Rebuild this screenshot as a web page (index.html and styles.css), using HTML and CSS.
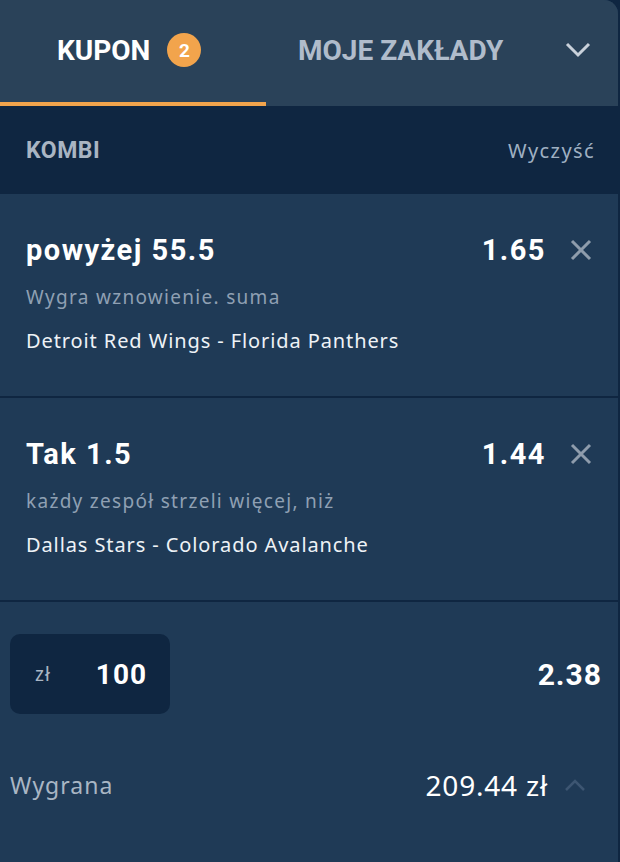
FILE: index.html
```html
<!DOCTYPE html>
<html lang="pl">
<head>
    <meta charset="UTF-8">
    <meta name="viewport" content="width=device-width, initial-scale=1.0">
    <title>Kupon</title>
    <link rel="stylesheet" href="styles.css">
</head>
<body>
    <div class="slip">
        <div class="tabs">
            <div class="tab active">
                <span>KUPON</span>
                <span class="badge">2</span>
            </div>
            <div class="tab">MOJE ZAKŁADY</div>
            <div class="toggle">
                <svg width="26" height="16" viewBox="0 0 26 16"><path d="M2 2 L13 13 L24 2" fill="none" stroke="#c9d1db" stroke-width="3"/></svg>
            </div>
        </div>

        <div class="kombi-bar">
            <span class="kombi">KOMBI</span>
            <span class="clear">Wyczyść</span>
        </div>

        <div class="bet">
            <div class="bet-head">
                <span class="bet-title">powyżej 55.5</span>
                <span class="bet-odds">1.65</span>
                <svg class="remove" width="22" height="22" viewBox="0 0 22 22"><path d="M2 2 L20 20 M20 2 L2 20" stroke="#8e9cac" stroke-width="3"/></svg>
            </div>
            <div class="bet-market">Wygra wznowienie. suma</div>
            <div class="bet-event">Detroit Red Wings - Florida Panthers</div>
        </div>

        <div class="bet">
            <div class="bet-head">
                <span class="bet-title">Tak 1.5</span>
                <span class="bet-odds">1.44</span>
                <svg class="remove" width="22" height="22" viewBox="0 0 22 22"><path d="M2 2 L20 20 M20 2 L2 20" stroke="#8e9cac" stroke-width="3"/></svg>
            </div>
            <div class="bet-market">każdy zespół strzeli więcej, niż</div>
            <div class="bet-event">Dallas Stars - Colorado Avalanche</div>
        </div>

        <div class="stake-row">
            <div class="stake">
                <span class="currency">zł</span>
                <span class="amount">100</span>
            </div>
            <span class="total-odds">2.38</span>
        </div>

        <div class="win-row">
            <span class="win-label">Wygrana</span>
            <span class="win-value">209.44 zł</span>
            <svg class="expand" width="22" height="14" viewBox="0 0 22 14"><path d="M2 12 L11 3 L20 12" fill="none" stroke="#3d5672" stroke-width="2.5"/></svg>
        </div>
    </div>
</body>
</html>
```

FILE: styles.css
```css
body {
    margin: 0;
    background: #0f2641;
    font-family: 'Noto Sans', sans-serif;
}
.slip {
    width: 618px;
    height: 862px;
    background: #1f3a56;
    border-top-right-radius: 14px;
    overflow: hidden;
}
.tabs {
    display: flex;
    align-items: center;
    height: 106px;
    background: #2a4259;
    font-family: 'Roboto', sans-serif;
    font-weight: 700;
    font-size: 28px;
}
.tab {
    height: 106px;
    box-sizing: border-box;
    display: flex;
    align-items: center;
    color: #b0bccb;
    padding-bottom: 2px;
    border-bottom: 4px solid transparent;
}
.tab.active {
    width: 266px;
    padding-left: 57px;
    color: #ffffff;
    border-bottom-color: #f2a44c;
}
.tab + .tab {
    padding-left: 32px;
}
.badge {
    width: 34px;
    height: 34px;
    margin-left: 17px;
    border-radius: 50%;
    background: #f2a44c;
    color: #ffffff;
    font-size: 19px;
    display: flex;
    align-items: center;
    justify-content: center;
}
.toggle {
    margin-left: auto;
    margin-right: 27px;
    margin-bottom: 6px;
    display: flex;
}
.kombi-bar {
    height: 88px;
    display: flex;
    align-items: center;
    justify-content: space-between;
    padding: 0 23px 0 26px;
    background: #0f2641;
}
.kombi {
    font-family: 'Roboto', sans-serif;
    font-weight: 700;
    font-size: 23px;
    letter-spacing: 0.5px;
    color: #a9b5c3;
}
.clear {
    font-size: 20px;
    letter-spacing: 1.4px;
    color: #9fb0c2;
}
.bet {
    height: 204px;
    box-sizing: border-box;
    padding: 34px 26px 0 26px;
    border-bottom: 2px solid #0f2641;
}
.bet-head {
    display: flex;
    align-items: center;
    height: 44px;
    font-family: 'Roboto', sans-serif;
    font-weight: 700;
    font-size: 29px;
    letter-spacing: 1.5px;
    color: #ffffff;
}
.bet-odds {
    margin-left: auto;
}
.remove {
    margin-left: 24px;
}
.bet-market {
    margin-top: 12px;
    font-size: 19px;
    letter-spacing: 1.3px;
    color: #8fa0b3;
}
.bet-event {
    margin-top: 17px;
    font-size: 20px;
    letter-spacing: 0.9px;
    color: #eef2f6;
}
.stake-row {
    display: flex;
    align-items: center;
    justify-content: space-between;
    padding: 32px 16px 0 10px;
}
.stake {
    width: 160px;
    height: 80px;
    box-sizing: border-box;
    padding-left: 25px;
    border-radius: 10px;
    background: #0f2641;
    display: flex;
    align-items: center;
}
.currency {
    font-size: 19px;
    letter-spacing: 1px;
    color: #a9b6c4;
}
.amount {
    margin-left: 45px;
    font-family: 'Roboto', sans-serif;
    font-weight: 700;
    font-size: 28px;
    letter-spacing: 1px;
    color: #ffffff;
}
.total-odds {
    font-family: 'Roboto', sans-serif;
    font-weight: 700;
    font-size: 30px;
    letter-spacing: 1px;
    color: #ffffff;
}
.win-row {
    display: flex;
    align-items: center;
    padding: 52px 32px 0 10px;
}
.win-label {
    font-size: 23px;
    letter-spacing: 1px;
    color: #a9b6c4;
}
.win-value {
    margin-left: auto;
    font-size: 28px;
    letter-spacing: 0.8px;
    color: #ffffff;
}
.expand {
    margin-left: 16px;
}
```
